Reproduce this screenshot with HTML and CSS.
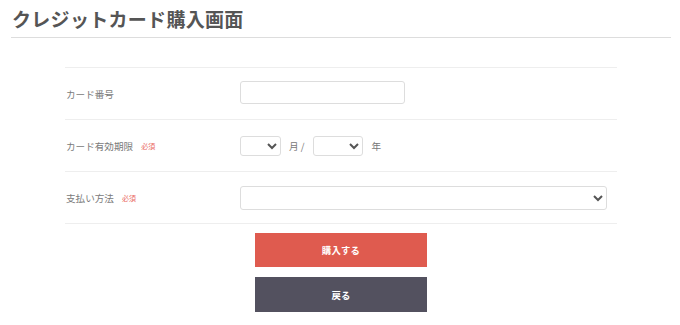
FILE: index.html
```html
<!DOCTYPE html>
<html lang="ja">
<head>
<meta charset="utf-8">
<title>クレジットカード購入画面</title>
<link rel="stylesheet" href="styles.css">
</head>
<body>
<div class="page">
  <h1 class="title">クレジットカード購入画面</h1>
  <div class="form">
    <div class="row">
      <div class="label">カード番号</div>
      <div class="field"><input class="text" type="text"></div>
    </div>
    <div class="row">
      <div class="label">カード有効期限<span class="req">必須</span></div>
      <div class="field">
        <select class="sel sel-month"><option></option></select>
        <span class="unit unit-month">月 /</span>
        <select class="sel sel-year"><option></option></select>
        <span class="unit unit-year">年</span>
      </div>
    </div>
    <div class="row">
      <div class="label">支払い方法<span class="req">必須</span></div>
      <div class="field"><select class="sel sel-pay"><option></option></select></div>
    </div>
  </div>
  <div class="actions">
    <button class="btn btn-buy" type="button">購入する</button>
    <button class="btn btn-back" type="button">戻る</button>
  </div>
</div>
</body>
</html>
```
FILE: styles.css
```css
* { box-sizing: border-box; }
html, body { margin: 0; padding: 0; background: #fff; }
body {
  font-family: "Noto Sans CJK JP", "Noto Sans", sans-serif;
  color: #777;
}
.page {
  margin: 0 9px 0 11px;
}
.title {
  margin: 0;
  padding: 5px 0 4px 1px;
  font-size: 19px;
  line-height: 28px;
  font-weight: bold;
  letter-spacing: 0.3px;
  color: #555;
  border-bottom: 1px solid #ddd;
}
.form {
  width: 552px;
  margin: 29px auto 0;
  border-top: 1px solid #eee;
}
.row {
  display: flex;
  align-items: center;
  height: 52px;
  border-bottom: 1px solid #eee;
}
.label {
  width: 175px;
  padding-left: 1px;
  font-size: 9.6px;
  color: #7a7a7a;
  display: flex;
  align-items: center;
}
.req {
  margin-left: 8px;
  font-size: 7px;
  color: #ea6a5f;
}
.field {
  display: flex;
  align-items: center;
  flex: 1;
}
.text {
  width: 165px;
  height: 23px;
  border: 1px solid #ddd;
  border-radius: 3px;
  background: #fff;
  margin: 0 0 3px 0;
}
.sel {
  height: 20px;
  border: 1px solid #ddd;
  border-radius: 3px;
  background: #fff;
  margin: 0;
  font-size: 10px;
  color: #555;
}
.sel-month { width: 41px; }
.sel-year { width: 50px; }
.sel-pay { width: 367px; height: 24px; }
.unit {
  font-size: 9.6px;
  color: #777;
}
.unit-month { margin: 0 8px 0 8px; }
.unit-year { margin-left: 9px; }
.actions {
  display: flex;
  flex-direction: column;
  align-items: center;
  gap: 10px;
  margin-top: 9px;
}
.btn {
  width: 172px;
  height: 34px;
  border: none;
  margin: 0;
  padding: 0;
  color: #fff;
  font-family: "Noto Sans CJK JP", "Noto Sans", sans-serif;
  font-size: 9.4px;
  font-weight: bold;
  letter-spacing: 0.2px;
}
.btn-buy { background: #df5b4f; }
.btn-back { background: #53515f; height: 35px; }
```
